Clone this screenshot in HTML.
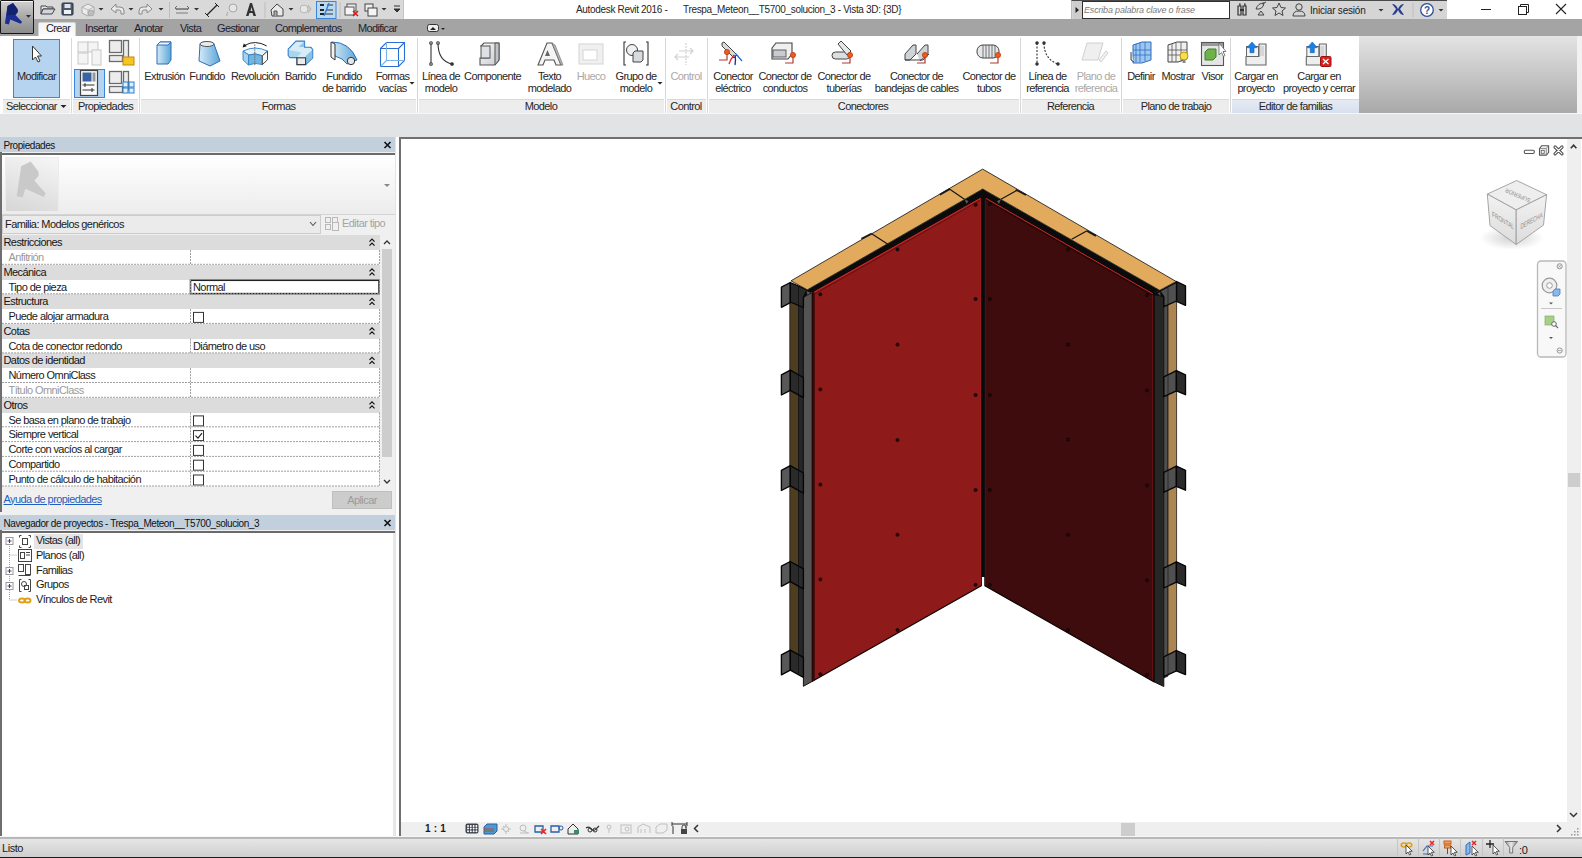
<!DOCTYPE html>
<html><head><meta charset="utf-8">
<style>
*{margin:0;padding:0;box-sizing:border-box}
html,body{width:1582px;height:858px;overflow:hidden;background:#fff;font-family:"Liberation Sans",sans-serif;color:#222}
.a{position:absolute}
.t{position:absolute;font-size:11px;line-height:13px;white-space:nowrap;color:#262626}
svg.a{overflow:visible}
</style></head><body>
<div class="a" style="left:0px;top:0px;width:1582px;height:20px;background:#ffffff;"></div>
<div class="a" style="left:33px;top:0px;width:371px;height:20px;background:#d9d9d9;border-bottom:1px solid #bcbcbc;border-right:1px solid #c4c4c4"></div>
<div class="t" style="left:576px;top:3px;font-size:10px;color:#262626;letter-spacing:-0.33px;">Autodesk Revit 2016 -</div>
<div class="t" style="left:683px;top:3px;font-size:10px;color:#262626;letter-spacing:-0.33px;">Trespa_Meteon__T5700_solucion_3 - Vista 3D: {3D}</div>
<div class="a" style="left:1071px;top:0px;width:376px;height:20px;background:#d5d5d5;border-top:1px solid #4a4a4a;border-left:1px solid #bdbdbd;border-bottom:1px solid #bdbdbd"></div>
<div class="a" style="left:1073px;top:1px;width:9px;height:18px;background:#cdcdcd;"></div>
<svg class="a" style="left:0;top:0" width="1100" height="20"><polygon points="1075.5,7 1079,10 1075.5,13" fill="#222"/></svg><div class="a" style="left:1082px;top:1px;width:148px;height:18px;background:#ffffff;border:1px solid #2e2e2e"></div>
<div class="t" style="left:1084px;top:3.5px;font-size:9px;color:#7a7a7a;letter-spacing:-0.18px;font-style:italic">Escriba palabra clave o frase</div>
<div class="t" style="left:1310px;top:4px;font-size:10px;color:#1a1a2a;letter-spacing:-0.20px;">Iniciar sesión</div>
<div class="a" style="left:0px;top:19px;width:1582px;height:17px;background:#a4a4a4;"></div>
<div class="a" style="left:38px;top:22px;width:38px;height:15px;background:linear-gradient(#f3f3f3,#fdfdfd);border:1px solid #d4d4d4;border-bottom:none;border-radius:2px 2px 0 0"></div>
<div class="t" style="left:46px;top:22px;font-size:11px;color:#202030;letter-spacing:-0.62px;">Crear</div>
<div class="t" style="left:85px;top:22px;font-size:11px;color:#202030;letter-spacing:-0.62px;">Insertar</div>
<div class="t" style="left:134px;top:22px;font-size:11px;color:#202030;letter-spacing:-0.62px;">Anotar</div>
<div class="t" style="left:180px;top:22px;font-size:11px;color:#202030;letter-spacing:-0.62px;">Vista</div>
<div class="t" style="left:217px;top:22px;font-size:11px;color:#202030;letter-spacing:-0.62px;">Gestionar</div>
<div class="t" style="left:275px;top:22px;font-size:11px;color:#202030;letter-spacing:-0.62px;">Complementos</div>
<div class="t" style="left:358px;top:22px;font-size:11px;color:#202030;letter-spacing:-0.62px;">Modificar</div>
<div class="a" style="left:0px;top:0px;width:34px;height:34px;background:linear-gradient(#d0d0d0,#a8a8a8 50%,#8c8c8c);border:1px solid #161616;border-radius:1px;box-shadow:inset 0 1px 0 #f4f4f4"></div>
<svg class="a" style="left:0;top:0" width="1582" height="36" viewBox="0 0 1582 36"><path d="M13,3 L7.5,6 L4.9,23.5 L8.9,24.5 L10.3,19.6 L20.5,23.8 L22.1,21.9 L15.4,14.9 L17.9,11.7 L17.5,9.1 Z" fill="#1b2f93"/><path d="M13,3 L7.5,6 L6.5,15.5 L10.5,15 L15.4,14.9 L17.9,11.7 L17.5,9.1 Z" fill="#0f1f6a" opacity="0.8"/><polygon points="25.9,14.9 31,14.9 28.4,17.7" fill="#2a2f3a"/><path d="M41,6 h5 l1,1 h6 v2 h-10 l-2,5 z" fill="#e6e6e6" stroke="#444" stroke-width="1"/><path d="M43,9 h12 l-3,5 h-11 z" fill="#cfd6df" stroke="#444" stroke-width="1"/><rect x="62" y="3" width="11" height="12" rx="1" fill="#4b5a6e" stroke="#2c3440"/><rect x="64.5" y="4" width="6" height="4" fill="#dfe4ea"/><rect x="64" y="10" width="7" height="4" fill="#f0f0f0"/><path d="M82,7 l6,-3 l6,3 v6 l-6,3 l-6,-3 z" fill="#ececec" stroke="#a8a8a8"/><path d="M82,7 l6,3 l6,-3 M88,10 v6" fill="none" stroke="#b8b8b8"/><circle cx="91" cy="13" r="3" fill="#bdbdbd" stroke="#9a9a9a" stroke-width="0.6"/><polygon points="98.5,8 103.5,8 101,10.5" fill="#333"/><path d="M111,9 l5,-5 v3 h4 q4,0 4,4 v3 h-3 v-2 q0,-2 -2,-2 h-3 v3 z" fill="#eaeaea" stroke="#8a8a8a"/><polygon points="128.5,8 133.5,8 131,10.5" fill="#333"/><path d="M152,9 l-5,-5 v3 h-4 q-4,0 -4,4 v3 h3 v-2 q0,-2 2,-2 h3 v3 z" fill="#eaeaea" stroke="#8a8a8a"/><polygon points="158.5,8 163.5,8 161,10.5" fill="#333"/><line x1="169.5" y1="2" x2="169.5" y2="18" stroke="#bdbdbd"/><rect x="176" y="8" width="12" height="2" fill="#888"/><rect x="176" y="12" width="12" height="2" fill="#aaa"/><path d="M177,6 l-2,2 l2,2 M187,6 l2,2 l-2,2" stroke="#666" fill="none"/><polygon points="194.0,8 199.0,8 196.5,10.5" fill="#333"/><line x1="207" y1="15" x2="217" y2="5" stroke="#222" stroke-width="1.3"/><line x1="205" y1="13" x2="209" y2="17" stroke="#222"/><line x1="215" y1="3" x2="219" y2="7" stroke="#222"/><circle cx="233" cy="8" r="4" fill="#e5e5e5" stroke="#a8a8a8"/><path d="M228,12 q-2,2 -1,4" stroke="#a8a8a8" fill="none"/><path d="M246,16 l4,-13 h2 l4,13 h-2.5 l-1,-3 h-3 l-1,3 z M250.5,11 h2 l-1,-4 z" fill="#333"/><line x1="265" y1="2" x2="265" y2="18" stroke="#bdbdbd"/><path d="M271,10 l6,-6 l6,5 v7 h-11 z" fill="#e9e9e9" stroke="#444"/><path d="M274,16 v-5 h3 v5" fill="#aaa" stroke="#555"/><polygon points="288.5,8 293.5,8 291,10.5" fill="#333"/><circle cx="304" cy="9" r="4" fill="#e6e6e6" stroke="#b5b5b5"/><path d="M308,5 l3,4 l-3,4" fill="#c8c8c8" stroke="#b5b5b5"/><rect x="316.5" y="1.5" width="19.5" height="17" fill="#b9d8f2" stroke="#3a84d5"/><path d="M320,5 h4 M320,10 h4 M320,14 h4" stroke="#222" stroke-width="2"/><path d="M327,5 h6 M326,10 h7 M325,14 h8" stroke="#333"/><line x1="324" y1="16" x2="329" y2="3" stroke="#2f7dd0" stroke-width="1.3"/><line x1="340" y1="2" x2="340" y2="18" stroke="#bdbdbd"/><rect x="347" y="4" width="9" height="7" fill="#eee" stroke="#555"/><rect x="345" y="7" width="9" height="8" fill="#f5f5f5" stroke="#555"/><path d="M353,11 l5,5 M358,11 l-5,5" stroke="#d81c1c" stroke-width="1.6"/><rect x="365" y="4" width="8" height="7" fill="#eee" stroke="#444"/><rect x="368" y="8" width="9" height="8" fill="#f5f5f5" stroke="#444"/><polygon points="381.5,8 386.5,8 384,10.5" fill="#333"/><path d="M394,6 h6 M394,9 l3,3 l3,-3 z" stroke="#333" fill="#333"/><path d="M1238,6 h3 v9 h-3 z M1243,6 h3 v9 h-3 z M1239,4 h1 v2 M1244,4 h1 v2" fill="none" stroke="#333" stroke-width="1.2"/><rect x="1240" y="9" width="4" height="2" fill="#333"/><path d="M1258,15 l3,-4 l3,4 z" fill="none" stroke="#444"/><path d="M1256,9 q2,-6 8,-6 q-1,7 -8,6 z" fill="none" stroke="#444"/><line x1="1262" y1="4" x2="1266" y2="2" stroke="#444"/><path d="M1279,3 l2,4.5 l4.5,0.5 l-3.5,3 l1,4.5 l-4,-2.5 l-4,2.5 l1,-4.5 l-3.5,-3 l4.5,-0.5 z" fill="none" stroke="#444"/><circle cx="1299" cy="7" r="3.2" fill="none" stroke="#444"/><path d="M1293,16 q0,-5 6,-5 q6,0 6,5 z" fill="none" stroke="#444"/><polygon points="1378.5,9 1383.5,9 1381,11.5" fill="#333"/><path d="M1392,4 q4,0 6,5 q2,-5 6,-5 l-4,5 l4,6 q-4,0 -6,-5 q-2,5 -6,5 l4,-6 z" fill="#2a3f8f"/><line x1="1413" y1="3" x2="1413" y2="17" stroke="#bdbdbd"/><circle cx="1427" cy="10" r="6.3" fill="#fff" stroke="#2b4f9a" stroke-width="1.3"/><text x="1427" y="14" font-size="10" font-weight="bold" text-anchor="middle" fill="#2b4f9a" font-family="Liberation Sans">?</text><polygon points="1438.5,9 1443.5,9 1441,11.5" fill="#333"/><line x1="1481" y1="9.5" x2="1491" y2="9.5" stroke="#222"/><rect x="1518.5" y="6.5" width="8" height="8" fill="none" stroke="#222"/><path d="M1520.5,6.5 v-2 h8 v8 h-2" fill="none" stroke="#222"/><path d="M1556,4 l10,10 M1566,4 l-10,10" stroke="#222" stroke-width="1.1"/><rect x="427.5" y="24.5" width="11" height="7" rx="2" fill="#eee" stroke="#333"/><path d="M430,30 l3,-3 l3,3 z" fill="#222"/><polygon points="441,28 445,28 443,30" fill="#222"/></svg>
<div class="a" style="left:0px;top:36px;width:1359px;height:78px;background:#ffffff;"></div>
<div class="a" style="left:1359px;top:36px;width:218px;height:78px;background:linear-gradient(#e4e4e4,#a8a8a8);"></div>
<div class="a" style="left:1577px;top:36px;width:5px;height:78px;background:#f2f2f2;"></div>
<div class="a" style="left:3px;top:99px;width:67px;height:15px;background:#ededed;border-top:1px solid #d9d9d9"></div>
<div class="a" style="left:73px;top:99px;width:65px;height:15px;background:#ededed;border-top:1px solid #d9d9d9"></div>
<div class="a" style="left:141px;top:99px;width:275px;height:15px;background:#ededed;border-top:1px solid #d9d9d9"></div>
<div class="a" style="left:419px;top:99px;width:245px;height:15px;background:#ededed;border-top:1px solid #d9d9d9"></div>
<div class="a" style="left:667px;top:99px;width:39px;height:15px;background:#ededed;border-top:1px solid #d9d9d9"></div>
<div class="a" style="left:709px;top:99px;width:310px;height:15px;background:#ededed;border-top:1px solid #d9d9d9"></div>
<div class="a" style="left:1022px;top:99px;width:98px;height:15px;background:#ededed;border-top:1px solid #d9d9d9"></div>
<div class="a" style="left:1123px;top:99px;width:106px;height:15px;background:#ededed;border-top:1px solid #d9d9d9"></div>
<div class="a" style="left:1232px;top:99px;width:127px;height:15px;background:linear-gradient(#e6ebf3,#d6dfee);border-top:1px solid #cfd8e6"></div>
<div class="a" style="left:71px;top:38px;width:1px;height:76px;background:#d7d7d7;"></div>
<div class="a" style="left:139px;top:38px;width:1px;height:76px;background:#d7d7d7;"></div>
<div class="a" style="left:417px;top:38px;width:1px;height:76px;background:#d7d7d7;"></div>
<div class="a" style="left:665px;top:38px;width:1px;height:76px;background:#d7d7d7;"></div>
<div class="a" style="left:707px;top:38px;width:1px;height:76px;background:#d7d7d7;"></div>
<div class="a" style="left:1020px;top:38px;width:1px;height:76px;background:#d7d7d7;"></div>
<div class="a" style="left:1121px;top:38px;width:1px;height:76px;background:#d7d7d7;"></div>
<div class="a" style="left:1230px;top:38px;width:1px;height:76px;background:#d7d7d7;"></div>
<div class="a" style="left:0px;top:113px;width:1582px;height:1px;background:#f7f7f7;"></div>
<div class="a" style="left:13px;top:39px;width:47px;height:59px;background:#b6d4f0;border:1px solid #3a86d8"></div>
<div class="a" style="left:74px;top:69px;width:31px;height:29px;background:#b6d4f0;border:1px solid #3a86d8"></div>
<div class="t" style="left:-63.5px;width:200px;text-align:center;top:70px;font-size:11px;color:#262626;letter-spacing:-0.60px;">Modificar</div>
<div class="t" style="left:64.5px;width:200px;text-align:center;top:70px;font-size:11px;color:#262626;letter-spacing:-0.62px;">Extrusión</div>
<div class="t" style="left:107.0px;width:200px;text-align:center;top:70px;font-size:11px;color:#262626;letter-spacing:-0.62px;">Fundido</div>
<div class="t" style="left:155.0px;width:200px;text-align:center;top:70px;font-size:11px;color:#262626;letter-spacing:-0.62px;">Revolución</div>
<div class="t" style="left:200.5px;width:200px;text-align:center;top:70px;font-size:11px;color:#262626;letter-spacing:-0.62px;">Barrido</div>
<div class="t" style="left:244.0px;width:200px;text-align:center;top:70px;font-size:11px;color:#262626;letter-spacing:-0.62px;">Fundido</div>
<div class="t" style="left:244.0px;width:200px;text-align:center;top:82px;font-size:11px;color:#262626;letter-spacing:-0.62px;">de barrido</div>
<div class="t" style="left:292.5px;width:200px;text-align:center;top:70px;font-size:11px;color:#262626;letter-spacing:-0.62px;">Formas</div>
<div class="t" style="left:292.5px;width:200px;text-align:center;top:82px;font-size:11px;color:#262626;letter-spacing:-0.62px;">vacías</div>
<div class="t" style="left:341.0px;width:200px;text-align:center;top:70px;font-size:11px;color:#262626;letter-spacing:-0.62px;">Línea de</div>
<div class="t" style="left:341.0px;width:200px;text-align:center;top:82px;font-size:11px;color:#262626;letter-spacing:-0.62px;">modelo</div>
<div class="t" style="left:392.5px;width:200px;text-align:center;top:70px;font-size:11px;color:#262626;letter-spacing:-0.62px;">Componente</div>
<div class="t" style="left:449.5px;width:200px;text-align:center;top:70px;font-size:11px;color:#262626;letter-spacing:-0.62px;">Texto</div>
<div class="t" style="left:449.5px;width:200px;text-align:center;top:82px;font-size:11px;color:#262626;letter-spacing:-0.62px;">modelado</div>
<div class="t" style="left:536.0px;width:200px;text-align:center;top:70px;font-size:11px;color:#262626;letter-spacing:-0.62px;">Grupo de</div>
<div class="t" style="left:536.0px;width:200px;text-align:center;top:82px;font-size:11px;color:#262626;letter-spacing:-0.62px;">modelo</div>
<div class="t" style="left:633.0px;width:200px;text-align:center;top:70px;font-size:11px;color:#262626;letter-spacing:-0.62px;">Conector</div>
<div class="t" style="left:633.0px;width:200px;text-align:center;top:82px;font-size:11px;color:#262626;letter-spacing:-0.62px;">eléctrico</div>
<div class="t" style="left:685.0px;width:200px;text-align:center;top:70px;font-size:11px;color:#262626;letter-spacing:-0.62px;">Conector de</div>
<div class="t" style="left:685.0px;width:200px;text-align:center;top:82px;font-size:11px;color:#262626;letter-spacing:-0.62px;">conductos</div>
<div class="t" style="left:744.0px;width:200px;text-align:center;top:70px;font-size:11px;color:#262626;letter-spacing:-0.62px;">Conector de</div>
<div class="t" style="left:744.0px;width:200px;text-align:center;top:82px;font-size:11px;color:#262626;letter-spacing:-0.62px;">tuberías</div>
<div class="t" style="left:816.5px;width:200px;text-align:center;top:70px;font-size:11px;color:#262626;letter-spacing:-0.62px;">Conector de</div>
<div class="t" style="left:816.5px;width:200px;text-align:center;top:82px;font-size:11px;color:#262626;letter-spacing:-0.62px;">bandejas de cables</div>
<div class="t" style="left:889.0px;width:200px;text-align:center;top:70px;font-size:11px;color:#262626;letter-spacing:-0.62px;">Conector de</div>
<div class="t" style="left:889.0px;width:200px;text-align:center;top:82px;font-size:11px;color:#262626;letter-spacing:-0.62px;">tubos</div>
<div class="t" style="left:947.5px;width:200px;text-align:center;top:70px;font-size:11px;color:#262626;letter-spacing:-0.62px;">Línea de</div>
<div class="t" style="left:947.5px;width:200px;text-align:center;top:82px;font-size:11px;color:#262626;letter-spacing:-0.62px;">referencia</div>
<div class="t" style="left:1041.0px;width:200px;text-align:center;top:70px;font-size:11px;color:#262626;letter-spacing:-0.62px;">Definir</div>
<div class="t" style="left:1078.0px;width:200px;text-align:center;top:70px;font-size:11px;color:#262626;letter-spacing:-0.62px;">Mostrar</div>
<div class="t" style="left:1112.5px;width:200px;text-align:center;top:70px;font-size:11px;color:#262626;letter-spacing:-0.62px;">Visor</div>
<div class="t" style="left:1156.0px;width:200px;text-align:center;top:70px;font-size:11px;color:#262626;letter-spacing:-0.62px;">Cargar en</div>
<div class="t" style="left:1156.0px;width:200px;text-align:center;top:82px;font-size:11px;color:#262626;letter-spacing:-0.62px;">proyecto</div>
<div class="t" style="left:1219.0px;width:200px;text-align:center;top:70px;font-size:11px;color:#262626;letter-spacing:-0.62px;">Cargar en</div>
<div class="t" style="left:1219.0px;width:200px;text-align:center;top:82px;font-size:11px;color:#262626;letter-spacing:-0.62px;">proyecto y cerrar</div>
<div class="t" style="left:491.0px;width:200px;text-align:center;top:70px;font-size:11px;color:#a9a9a9;letter-spacing:-0.62px;">Hueco</div>
<div class="t" style="left:586.0px;width:200px;text-align:center;top:70px;font-size:11px;color:#a9a9a9;letter-spacing:-0.62px;">Control</div>
<div class="t" style="left:996.0px;width:200px;text-align:center;top:70px;font-size:11px;color:#a9a9a9;letter-spacing:-0.62px;">Plano de</div>
<div class="t" style="left:996.0px;width:200px;text-align:center;top:82px;font-size:11px;color:#a9a9a9;letter-spacing:-0.62px;">referencia</div>
<div class="t" style="left:6px;top:100px;font-size:11px;color:#262626;letter-spacing:-0.60px;">Seleccionar</div>
<div class="t" style="left:5.5px;width:200px;text-align:center;top:100px;font-size:11px;color:#262626;letter-spacing:-0.60px;">Propiedades</div>
<div class="t" style="left:178.5px;width:200px;text-align:center;top:100px;font-size:11px;color:#262626;letter-spacing:-0.60px;">Formas</div>
<div class="t" style="left:441.0px;width:200px;text-align:center;top:100px;font-size:11px;color:#262626;letter-spacing:-0.60px;">Modelo</div>
<div class="t" style="left:586.0px;width:200px;text-align:center;top:100px;font-size:11px;color:#262626;letter-spacing:-0.60px;">Control</div>
<div class="t" style="left:763.0px;width:200px;text-align:center;top:100px;font-size:11px;color:#262626;letter-spacing:-0.60px;">Conectores</div>
<div class="t" style="left:970.5px;width:200px;text-align:center;top:100px;font-size:11px;color:#262626;letter-spacing:-0.60px;">Referencia</div>
<div class="t" style="left:1076.0px;width:200px;text-align:center;top:100px;font-size:11px;color:#262626;letter-spacing:-0.60px;">Plano de trabajo</div>
<div class="t" style="left:1195.5px;width:200px;text-align:center;top:100px;font-size:11px;color:#262626;letter-spacing:-0.60px;">Editor de familias</div>
<svg class="a" style="left:0;top:0" width="1582" height="114" viewBox="0 0 1582 114"><defs><linearGradient id="gb" x1="0" y1="0" x2="1" y2="0"><stop offset="0" stop-color="#d6e9f7"/><stop offset="1" stop-color="#5aa6d8"/></linearGradient><linearGradient id="gg" x1="0" y1="0" x2="1" y2="1"><stop offset="0" stop-color="#fafafa"/><stop offset="1" stop-color="#c7cbd0"/></linearGradient></defs><polygon points="60.5,105 66.5,105 63.5,108" fill="#222"/><polygon points="409.5,82 414.5,82 412,84.5" fill="#222"/><polygon points="657.5,82 662.5,82 660,84.5" fill="#222"/><path d="M32.5,46 v14 l3,-3 l2.5,5 l2,-1 l-2.5,-5 h4 z" fill="#fff" stroke="#333" stroke-width="1"/><g stroke="#c8c8c8" fill="#f4f4f4"><rect x="78" y="42" width="10" height="10"/><rect x="88" y="42" width="10" height="10"/><rect x="78" y="53" width="10" height="11"/><rect x="92" y="50" width="9" height="15"/></g><g stroke="#6b6b6b" stroke-width="1.3" fill="#ececec"><rect x="109.5" y="40.5" width="12" height="12"/><rect x="123.5" y="40.5" width="5" height="18"/><rect x="109.5" y="55.5" width="13" height="6"/></g><rect x="123" y="57" width="11" height="8" fill="#f7c325" stroke="#c18a10"/><rect x="80.5" y="70.5" width="17" height="25" fill="#fafafa" stroke="#444" stroke-width="1.2"/><rect x="82.5" y="72.5" width="9" height="9" fill="#3a63a3"/><rect x="92.5" y="72.5" width="3" height="9" fill="#999"/><path d="M82.5,85 h12 M82.5,90 h12 M85,83 v4 M92,88 v4" stroke="#333"/><g stroke="#6b6b6b" stroke-width="1.3" fill="#ececec"><rect x="109.5" y="71.5" width="12" height="12"/><rect x="123.5" y="71.5" width="5" height="18"/><rect x="109.5" y="86.5" width="13" height="6"/></g><g fill="#dff0fb" stroke="#2a7fd0"><rect x="123" y="82" width="5" height="5"/><rect x="129" y="82" width="5" height="5"/><rect x="123" y="88" width="5" height="5"/><rect x="129" y="88" width="5" height="5"/></g><path d="M157,45 l3,-3 h11 v18 l-3,4 h-11 z" fill="url(#gb)" stroke="#2c6fb8" stroke-width="1"/><path d="M157,45 l3,-3 h11 l-3,3 z" fill="#f4f8fb" stroke="#2c6fb8"/><path d="M200,44 q7,-5 14,0 l6,17 l-10,5 l-11,-5 z" fill="url(#gb)" stroke="#2c6fb8"/><ellipse cx="207" cy="44" rx="7" ry="2.5" fill="#e8ecef" stroke="#555"/><path d="M243,51.1 Q255,45 267.5,51.1 L262.3,55.8 Q255,52.5 248.8,55 Z" fill="#e6f3fa" stroke="#2f7fc8" stroke-width="0.9" stroke-linejoin="round"/><path d="M243,51.1 L248.8,55 L248.4,65 L243,59.8 Z" fill="#a6d3ec" stroke="#2f7fc8" stroke-width="0.9" stroke-linejoin="round"/><path d="M248.8,55 Q255,52.5 262.3,55.8 L262.3,64.6 Q255,62 248.4,65 Z" fill="#72b5df" stroke="#2f7fc8" stroke-width="0.9" stroke-linejoin="round"/><path d="M262.3,55.8 L267.5,51.1 L267.5,59.8 L262.3,64.6 Z" fill="#fbfbfb" stroke="#333" stroke-width="0.9" stroke-linejoin="round"/><path d="M266.7,45.9 Q255,39.5 245,45.3" stroke="#222" fill="none" stroke-width="1"/><path d="M242.6,47.6 l1.2,-4 l3,2.6 z" fill="#111"/><line x1="254.8" y1="44.5" x2="254.8" y2="66" stroke="#666" stroke-width="1" stroke-dasharray="1.4,1"/><polygon points="295.9,41.1 304.6,41.1 304.6,47.3 311,47.3 312.7,49.5 312.7,57.9 305.7,64.6 296.9,64.6 296.9,57.6 290,57.6 288.2,55.5 288.2,49.2" fill="#d8ecf7" stroke="#2d7cc8" stroke-width="1.1" stroke-linejoin="round"/><polygon points="305.7,64 312.2,57.9 312.2,50 305.7,56" fill="#86c2e6"/><polygon points="289,50 289,55.3 290.3,57 297,57 301.5,52.5" fill="#a9d6ef"/><polygon points="298.5,47 304.2,47 304.2,41.6" fill="#8ec7e8"/><rect x="297" y="57.8" width="8.6" height="6.8" fill="#ebebee" stroke="#3a3a3a" stroke-width="1.1"/><path d="M332,42 q18,0 25,18 l-10,4 q-4,-6 -12,-8 z" fill="url(#gb)" stroke="#2c6fb8"/><path d="M331,42 l4,2 v16 l-4,-3 z" fill="#f2f2f2" stroke="#333"/><circle cx="351" cy="61" r="3.7" fill="#e3e5e8" stroke="#333"/><g fill="none" stroke="#2a6fd0" stroke-width="1.1"><path d="M380.5,48.5 l6,-6 h18 v18 l-6,6 h-18 z M380.5,48.5 h18 v18 M398.5,48.5 l6,-6"/><path d="M386.5,42.5 v18 h18 M386.5,60.5 l-6,6" stroke="#7ab2ea"/></g><g stroke="#333" stroke-width="1.1" fill="#fff"><line x1="431" y1="43" x2="431" y2="64"/><circle cx="431" cy="43" r="1.3"/><circle cx="431" cy="64" r="1.3"/><path d="M438,43 q0,18 14,21" fill="none"/><circle cx="438" cy="43" r="1.3"/><circle cx="452" cy="64" r="1.3" fill="#333"/></g><path d="M481,46 l3,-3 h15 v17 l-4,5 h-15 v-7 h9 l-1,-10 z" fill="url(#gg)" stroke="#555" stroke-width="1.1"/><path d="M495,43 l4,0 v17 l-4,5 z" fill="#c0c4c8" stroke="#555"/><rect x="481" y="46" width="9" height="12" fill="#dde0e4" stroke="#555"/><path d="M538,65 l9,-22 h5 l9,22 h-5 l-2,-5 h-9 l-2,5 z" fill="#f5f5f5" stroke="#555" stroke-width="1.1"/><path d="M545,56 h5 l-2.5,-6 z" fill="#666"/><path d="M552,43 l3,2 l8,20 h-2 z" fill="#b4b8bd" stroke="#777" stroke-width="0.7"/><rect x="579" y="44" width="24" height="20" fill="#f0f0f0" stroke="#dadada" stroke-width="1.2"/><rect x="583" y="50" width="14" height="10" fill="#fff" stroke="#d5d5d5"/><path d="M626,42 h-2 v23 h2 M646,42 h2 v23 h-2" fill="none" stroke="#333" stroke-width="1.1"/><circle cx="632" cy="50" r="5.5" fill="#f0f0f0" stroke="#444"/><path d="M633,53 l2,-2 h8 v9 l-2,2 h-8 z" fill="#d7dbe0" stroke="#444"/><g stroke="#d2d2d2" stroke-width="1.2" fill="none"><line x1="686" y1="43" x2="686" y2="65" stroke-dasharray="2,1"/><path d="M679,51 h14 M690,48 l3,3 l-3,3 M675,57 h14 M678,54 l-3,3 l3,3"/></g><path d="M722,43 l2,-1 l13,13 l-3,3 l-12,-12 z" fill="#d8dadc" stroke="#444"/><path d="M734,55 q-4,5 -5,9" stroke="#e22" stroke-width="1.3" fill="none"/><path d="M735,55 q1,5 0,10" stroke="#2222aa" stroke-width="1.3" fill="none"/><path d="M736,54 l6,7" stroke="#1b6fd0" stroke-width="1.2"/><path d="M727,52 v8 h-8" stroke="#b03a2e" stroke-width="1.2" fill="none"/><circle cx="727" cy="52" r="2.6" fill="#f05a1a" stroke="#b8400e" stroke-width="0.8"/><path d="M772,48 l4,-5 h16 v11 l-4,5 h-16 z" fill="#f0f0f0" stroke="#444" stroke-width="1.1"/><rect x="773" y="50" width="13" height="7" fill="#c8ccd0" stroke="#444" stroke-width="0.8"/><path d="M793,55 v8 h-8" stroke="#b03a2e" stroke-width="1.2" fill="none"/><circle cx="793" cy="55" r="2.6" fill="#f05a1a" stroke="#b8400e" stroke-width="0.8"/><rect x="832" y="52" width="18" height="7" rx="3.5" fill="#dcdfe2" stroke="#444"/><path d="M838,44 l3,-3 l10,10 l-4,4 z" fill="#e5e7ea" stroke="#444"/><path d="M850,55 v8 h-8" stroke="#b03a2e" stroke-width="1.2" fill="none"/><circle cx="850" cy="55" r="2.6" fill="#f05a1a" stroke="#b8400e" stroke-width="0.8"/><path d="M905,54 l8,-9 l3,0 v9 l-6,6 h-5 z M917,54 l8,-9 h3 v9 l-8,7" fill="#cfd3d8" stroke="#444"/><path d="M905,60 l5,0 l13,0 l6,-6" fill="none" stroke="#444"/><path d="M925,55 v8 h-8" stroke="#b03a2e" stroke-width="1.2" fill="none"/><circle cx="925" cy="55" r="2.6" fill="#f05a1a" stroke="#b8400e" stroke-width="0.8"/><rect x="977" y="45" width="22" height="13" rx="6" fill="#e5e7ea" stroke="#444"/><g stroke="#555" stroke-width="0.8"><line x1="983" y1="45" x2="983" y2="58"/><line x1="986" y1="45" x2="986" y2="58"/><line x1="989" y1="45" x2="989" y2="58"/><line x1="992" y1="45" x2="992" y2="58"/><line x1="995" y1="45" x2="995" y2="58"/></g><path d="M998,55 v8 h-8" stroke="#b03a2e" stroke-width="1.2" fill="none"/><circle cx="998" cy="55" r="2.6" fill="#f05a1a" stroke="#b8400e" stroke-width="0.8"/><g stroke="#333" stroke-width="1.1" fill="#333"><line x1="1037" y1="43" x2="1037" y2="64" stroke-dasharray="2,1.5"/><circle cx="1037" cy="43" r="1.2"/><circle cx="1037" cy="64" r="1.2"/><path d="M1044,43 q0,16 14,21" fill="none" stroke-dasharray="2,1.5"/><circle cx="1044" cy="43" r="1.2"/><circle cx="1058" cy="64" r="1.2"/></g><path d="M1087,43 h16 l-5,17 h-16 z" fill="#efefef" stroke="#d0d0d0"/><path d="M1099,60 l7,-9 l2,2 l-7,9 z" fill="#f2f2f2" stroke="#cfcfcf"/><path d="M1133,45 l9,-3 h9 v18 l-9,3 h-9 z" fill="#9ec6ee" stroke="#2f6fc0"/><g stroke="#2f6fc0" stroke-width="0.8"><path d="M1136,44 v18 M1140,43 v19 M1145,42 v19 M1133,50 h18 M1133,55 h18"/></g><path d="M1131,52 v8 l3,2" stroke="#444" fill="#e0e0e0"/><path d="M1168,45 l9,-3 h10 v17 l-9,3 h-10 z" fill="#f0f0f0" stroke="#444"/><g stroke="#555" stroke-width="0.8"><path d="M1172,44 v18 M1176,43 v19 M1181,42 v19 M1168,50 h19 M1168,55 h19"/></g><circle cx="1184" cy="56" r="4" fill="#f6e04a" stroke="#b99a10"/><rect x="1182.5" y="60" width="3" height="3" fill="#888"/><rect x="1201.5" y="42.5" width="22" height="23" fill="#e5e5e5" stroke="#555" stroke-width="1.1"/><rect x="1202" y="43" width="21" height="3" fill="#999"/><path d="M1205,52 l3,-3 h8 v8 l-3,3 h-8 z" fill="#6fb24a" stroke="#3f7f2a"/><path d="M1219,43 v12 l2.5,-2.5 l2,4 l1.5,-1 l-2,-4 h3 z" fill="#fff" stroke="#555" stroke-width="0.7"/><path d="M1246,56.5 h13 v-12.5 h7 v21 h-20 z" fill="#eeeeee" stroke="#666" stroke-width="1.1" stroke-linejoin="round"/><rect x="1260" y="46" width="4" height="10" fill="#d4d6da"/><rect x="1246.5" y="46.5" width="12" height="10" fill="#f4f4f4" stroke="#666" stroke-width="1"/><path d="M1250,52.7 v-5 h-3 l5,-5.7 l5,5.7 h-3 v5 z" fill="#1b7fe3" stroke="#0b5cb8" stroke-width="0.6"/><path d="M1306.3,56.5 h13 v-12.5 h7 v21 h-20 z" fill="#eeeeee" stroke="#666" stroke-width="1.1" stroke-linejoin="round"/><rect x="1320.3" y="46" width="4" height="10" fill="#d4d6da"/><rect x="1306.8" y="46.5" width="12" height="10" fill="#f4f4f4" stroke="#666" stroke-width="1"/><path d="M1310.3,52.7 v-5 h-3 l5,-5.7 l5,5.7 h-3 v5 z" fill="#1b7fe3" stroke="#0b5cb8" stroke-width="0.6"/><rect x="1320.5" y="56.5" width="10.5" height="10" rx="1.2" fill="#d6231f" stroke="#9a1010"/><path d="M1323,59 l5.5,5 M1328.5,59 l-5.5,5" stroke="#fff" stroke-width="1.2"/></svg>
<div class="a" style="left:0px;top:114px;width:1582px;height:23px;background:#e2e3e5;"></div>
<div class="a" style="left:0px;top:137px;width:395px;height:375px;background:#f0f0f0;"></div>
<div class="a" style="left:0px;top:137px;width:395px;height:15px;background:#c2d0de;"></div>
<div class="t" style="left:3.5px;top:138.5px;font-size:10px;color:#111;letter-spacing:-0.44px;">Propiedades</div>
<div class="a" style="left:0px;top:152px;width:2px;height:360px;background:#6e6e6e;"></div>
<div class="a" style="left:2px;top:153px;width:393px;height:2px;background:#6a6a6a;"></div>
<div class="a" style="left:2px;top:155px;width:393px;height:60px;background:linear-gradient(#ffffff,#ececec);"></div>
<div class="a" style="left:5px;top:157px;width:54px;height:55px;background:linear-gradient(200deg,#f6f6f6,#d6d6d6);border:1px solid #ececec"></div>
<div class="a" style="left:2px;top:214px;width:393px;height:1px;background:#d4d4d4;"></div>
<div class="a" style="left:2px;top:215px;width:319px;height:19px;background:#ebebeb;border:1px solid #cccccc"></div>
<div class="t" style="left:5px;top:218px;font-size:11px;color:#1a1a1a;letter-spacing:-0.58px;">Familia: Modelos genéricos</div>
<div class="t" style="left:342px;top:217px;font-size:11px;color:#a4a4a4;letter-spacing:-0.58px;">Editar tipo</div>
<div class="a" style="left:2px;top:235.2px;width:378px;height:14.78px;background:#dcdcdc;"></div>
<div class="t" style="left:3.5px;top:236.2px;font-size:11px;color:#141414;letter-spacing:-0.58px;">Restricciones</div>
<div class="a" style="left:2px;top:250.0px;width:378px;height:14.78px;background:#ffffff;"></div>
<div class="t" style="left:8.5px;top:251.0px;font-size:11px;color:#9a9a9a;letter-spacing:-0.58px;">Anfitrión</div>
<div class="a" style="left:2px;top:264.8px;width:378px;height:14.78px;background:#dcdcdc;"></div>
<div class="t" style="left:3.5px;top:265.8px;font-size:11px;color:#141414;letter-spacing:-0.58px;">Mecánica</div>
<div class="a" style="left:2px;top:279.5px;width:378px;height:14.78px;background:#ffffff;"></div>
<div class="t" style="left:8.5px;top:280.5px;font-size:11px;color:#1a1a1a;letter-spacing:-0.58px;">Tipo de pieza</div>
<div class="t" style="left:193px;top:280.5px;font-size:11px;color:#1a1a1a;letter-spacing:-0.58px;">Normal</div>
<div class="a" style="left:2px;top:294.3px;width:378px;height:14.78px;background:#dcdcdc;"></div>
<div class="t" style="left:3.5px;top:295.3px;font-size:11px;color:#141414;letter-spacing:-0.58px;">Estructura</div>
<div class="a" style="left:2px;top:309.1px;width:378px;height:14.78px;background:#ffffff;"></div>
<div class="t" style="left:8.5px;top:310.1px;font-size:11px;color:#1a1a1a;letter-spacing:-0.58px;">Puede alojar armadura</div>
<div class="a" style="left:2px;top:323.9px;width:378px;height:14.78px;background:#dcdcdc;"></div>
<div class="t" style="left:3.5px;top:324.9px;font-size:11px;color:#141414;letter-spacing:-0.58px;">Cotas</div>
<div class="a" style="left:2px;top:338.7px;width:378px;height:14.78px;background:#ffffff;"></div>
<div class="t" style="left:8.5px;top:339.7px;font-size:11px;color:#1a1a1a;letter-spacing:-0.58px;">Cota de conector redondo</div>
<div class="t" style="left:193px;top:339.7px;font-size:11px;color:#1a1a1a;letter-spacing:-0.58px;">Diámetro de uso</div>
<div class="a" style="left:2px;top:353.4px;width:378px;height:14.78px;background:#dcdcdc;"></div>
<div class="t" style="left:3.5px;top:354.4px;font-size:11px;color:#141414;letter-spacing:-0.58px;">Datos de identidad</div>
<div class="a" style="left:2px;top:368.2px;width:378px;height:14.78px;background:#ffffff;"></div>
<div class="t" style="left:8.5px;top:369.2px;font-size:11px;color:#1a1a1a;letter-spacing:-0.58px;">Número OmniClass</div>
<div class="a" style="left:2px;top:383.0px;width:378px;height:14.78px;background:#ffffff;"></div>
<div class="t" style="left:8.5px;top:384.0px;font-size:11px;color:#9a9a9a;letter-spacing:-0.58px;">Título OmniClass</div>
<div class="a" style="left:2px;top:397.8px;width:378px;height:14.78px;background:#dcdcdc;"></div>
<div class="t" style="left:3.5px;top:398.8px;font-size:11px;color:#141414;letter-spacing:-0.58px;">Otros</div>
<div class="a" style="left:2px;top:412.6px;width:378px;height:14.78px;background:#ffffff;"></div>
<div class="t" style="left:8.5px;top:413.6px;font-size:11px;color:#1a1a1a;letter-spacing:-0.58px;">Se basa en plano de trabajo</div>
<div class="a" style="left:2px;top:427.3px;width:378px;height:14.78px;background:#ffffff;"></div>
<div class="t" style="left:8.5px;top:428.3px;font-size:11px;color:#1a1a1a;letter-spacing:-0.58px;">Siempre vertical</div>
<div class="a" style="left:2px;top:442.1px;width:378px;height:14.78px;background:#ffffff;"></div>
<div class="t" style="left:8.5px;top:443.1px;font-size:11px;color:#1a1a1a;letter-spacing:-0.58px;">Corte con vacíos al cargar</div>
<div class="a" style="left:2px;top:456.9px;width:378px;height:14.78px;background:#ffffff;"></div>
<div class="t" style="left:8.5px;top:457.9px;font-size:11px;color:#1a1a1a;letter-spacing:-0.58px;">Compartido</div>
<div class="a" style="left:2px;top:471.7px;width:378px;height:14.78px;background:#ffffff;"></div>
<div class="t" style="left:8.5px;top:472.7px;font-size:11px;color:#1a1a1a;letter-spacing:-0.58px;">Punto de cálculo de habitación</div>
<div class="a" style="left:381px;top:235px;width:13px;height:252px;background:#f0f0f0;"></div>
<div class="a" style="left:382px;top:249px;width:10px;height:208px;background:#cdcdcd;"></div>
<svg class="a" style="left:0;top:0" width="400" height="520" viewBox="0 0 400 520"><path d="M30.6,161.4 L21.2,166.3 L16.7,196.5 L22.8,197.3 L25.3,188.7 L43.6,196.9 L45.7,193.6 L34.3,180.6 L38.7,175.7 L38.3,171.6 Z" fill="#c9c9c9"/><path d="M384.5,142 l6,6 M390.5,142 l-6,6" stroke="#111" stroke-width="1.6"/><path d="M384,184 l3,3 l3,-3 z" fill="#888"/><path d="M310,222 l3,3.5 l3,-3.5" fill="none" stroke="#555" stroke-width="1.1"/><g fill="none" stroke="#b8b8b8"><rect x="325.5" y="217.5" width="5" height="5"/><rect x="332.5" y="217.5" width="5" height="5"/><rect x="325.5" y="224.5" width="5" height="5"/><rect x="332.5" y="222.5" width="6" height="8"/></g><path d="M369.5,241.7 l2.5,-2.5 l2.5,2.5 M369.5,245.7 l2.5,-2.5 l2.5,2.5" fill="none" stroke="#111" stroke-width="1.2"/><line x1="2" y1="264.3" x2="380" y2="264.3" stroke="#a0a0a0" stroke-dasharray="2,1"/><line x1="190.5" y1="250.0" x2="190.5" y2="264.3" stroke="#a0a0a0" stroke-dasharray="2,1"/><line x1="379.5" y1="250.0" x2="379.5" y2="264.3" stroke="#a0a0a0" stroke-dasharray="2,1"/><path d="M369.5,271.3 l2.5,-2.5 l2.5,2.5 M369.5,275.3 l2.5,-2.5 l2.5,2.5" fill="none" stroke="#111" stroke-width="1.2"/><rect x="190.5" y="280.3" width="188.5" height="13.3" fill="none" stroke="#222" stroke-width="1.5"/><line x1="2" y1="293.8" x2="380" y2="293.8" stroke="#a0a0a0" stroke-dasharray="2,1"/><line x1="190.5" y1="279.5" x2="190.5" y2="293.8" stroke="#a0a0a0" stroke-dasharray="2,1"/><line x1="379.5" y1="279.5" x2="379.5" y2="293.8" stroke="#a0a0a0" stroke-dasharray="2,1"/><path d="M369.5,300.8 l2.5,-2.5 l2.5,2.5 M369.5,304.8 l2.5,-2.5 l2.5,2.5" fill="none" stroke="#111" stroke-width="1.2"/><rect x="193.5" y="312.4" width="10" height="10" fill="#fff" stroke="#333"/><line x1="2" y1="323.4" x2="380" y2="323.4" stroke="#a0a0a0" stroke-dasharray="2,1"/><line x1="190.5" y1="309.1" x2="190.5" y2="323.4" stroke="#a0a0a0" stroke-dasharray="2,1"/><line x1="379.5" y1="309.1" x2="379.5" y2="323.4" stroke="#a0a0a0" stroke-dasharray="2,1"/><path d="M369.5,330.4 l2.5,-2.5 l2.5,2.5 M369.5,334.4 l2.5,-2.5 l2.5,2.5" fill="none" stroke="#111" stroke-width="1.2"/><line x1="2" y1="352.9" x2="380" y2="352.9" stroke="#a0a0a0" stroke-dasharray="2,1"/><line x1="190.5" y1="338.7" x2="190.5" y2="352.9" stroke="#a0a0a0" stroke-dasharray="2,1"/><line x1="379.5" y1="338.7" x2="379.5" y2="352.9" stroke="#a0a0a0" stroke-dasharray="2,1"/><path d="M369.5,359.9 l2.5,-2.5 l2.5,2.5 M369.5,363.9 l2.5,-2.5 l2.5,2.5" fill="none" stroke="#111" stroke-width="1.2"/><line x1="2" y1="382.5" x2="380" y2="382.5" stroke="#a0a0a0" stroke-dasharray="2,1"/><line x1="190.5" y1="368.2" x2="190.5" y2="382.5" stroke="#a0a0a0" stroke-dasharray="2,1"/><line x1="379.5" y1="368.2" x2="379.5" y2="382.5" stroke="#a0a0a0" stroke-dasharray="2,1"/><line x1="2" y1="397.3" x2="380" y2="397.3" stroke="#a0a0a0" stroke-dasharray="2,1"/><line x1="190.5" y1="383.0" x2="190.5" y2="397.3" stroke="#a0a0a0" stroke-dasharray="2,1"/><line x1="379.5" y1="383.0" x2="379.5" y2="397.3" stroke="#a0a0a0" stroke-dasharray="2,1"/><path d="M369.5,404.3 l2.5,-2.5 l2.5,2.5 M369.5,408.3 l2.5,-2.5 l2.5,2.5" fill="none" stroke="#111" stroke-width="1.2"/><rect x="193.5" y="415.9" width="10" height="10" fill="#fff" stroke="#333"/><line x1="2" y1="426.8" x2="380" y2="426.8" stroke="#a0a0a0" stroke-dasharray="2,1"/><line x1="190.5" y1="412.6" x2="190.5" y2="426.8" stroke="#a0a0a0" stroke-dasharray="2,1"/><line x1="379.5" y1="412.6" x2="379.5" y2="426.8" stroke="#a0a0a0" stroke-dasharray="2,1"/><rect x="193.5" y="430.6" width="10" height="10" fill="#fff" stroke="#333"/><path d="M195.5,435.6 l2.5,2.5 l4,-5" fill="none" stroke="#222" stroke-width="1.2"/><line x1="2" y1="441.6" x2="380" y2="441.6" stroke="#a0a0a0" stroke-dasharray="2,1"/><line x1="190.5" y1="427.3" x2="190.5" y2="441.6" stroke="#a0a0a0" stroke-dasharray="2,1"/><line x1="379.5" y1="427.3" x2="379.5" y2="441.6" stroke="#a0a0a0" stroke-dasharray="2,1"/><rect x="193.5" y="445.4" width="10" height="10" fill="#fff" stroke="#333"/><line x1="2" y1="456.4" x2="380" y2="456.4" stroke="#a0a0a0" stroke-dasharray="2,1"/><line x1="190.5" y1="442.1" x2="190.5" y2="456.4" stroke="#a0a0a0" stroke-dasharray="2,1"/><line x1="379.5" y1="442.1" x2="379.5" y2="456.4" stroke="#a0a0a0" stroke-dasharray="2,1"/><rect x="193.5" y="460.2" width="10" height="10" fill="#fff" stroke="#333"/><line x1="2" y1="471.2" x2="380" y2="471.2" stroke="#a0a0a0" stroke-dasharray="2,1"/><line x1="190.5" y1="456.9" x2="190.5" y2="471.2" stroke="#a0a0a0" stroke-dasharray="2,1"/><line x1="379.5" y1="456.9" x2="379.5" y2="471.2" stroke="#a0a0a0" stroke-dasharray="2,1"/><rect x="193.5" y="475.0" width="10" height="10" fill="#fff" stroke="#333"/><line x1="2" y1="486.0" x2="380" y2="486.0" stroke="#a0a0a0" stroke-dasharray="2,1"/><line x1="190.5" y1="471.7" x2="190.5" y2="486.0" stroke="#a0a0a0" stroke-dasharray="2,1"/><line x1="379.5" y1="471.7" x2="379.5" y2="486.0" stroke="#a0a0a0" stroke-dasharray="2,1"/><path d="M384,244 l3,-3 l3,3" fill="none" stroke="#333" stroke-width="1.3"/><path d="M384,480 l3,3 l3,-3" fill="none" stroke="#333" stroke-width="1.3"/></svg>
<div class="t" style="left:3.5px;top:492.5px;font-size:11px;color:#1f5fbf;letter-spacing:-0.58px;text-decoration:underline">Ayuda de propiedades</div>
<div class="a" style="left:332px;top:491px;width:60px;height:18px;background:#cccccc;border:1px solid #bebebe"></div>
<div class="t" style="left:332.0px;width:60px;text-align:center;top:493.5px;font-size:11px;color:#9b9b9b;letter-spacing:-0.58px;">Aplicar</div>
<div class="a" style="left:395px;top:137px;width:1px;height:699px;background:#e4e4e4;"></div>
<div class="a" style="left:0px;top:512px;width:395px;height:324px;background:#f0f0f0;"></div>
<div class="a" style="left:0px;top:515px;width:395px;height:15px;background:#c2d0de;"></div>
<div class="t" style="left:3.5px;top:516.5px;font-size:10px;color:#111;letter-spacing:-0.44px;">Navegador de proyectos - Trespa_Meteon__T5700_solucion_3</div>
<div class="a" style="left:2px;top:531px;width:393px;height:2px;background:#6a6a6a;"></div>
<div class="a" style="left:0px;top:530px;width:2px;height:306px;background:#6e6e6e;"></div>
<div class="a" style="left:2px;top:533px;width:391px;height:303px;background:#ffffff;"></div>
<div class="a" style="left:393px;top:533px;width:2px;height:303px;background:#e8e8e8;"></div>
<div class="a" style="left:34px;top:534px;width:49px;height:15px;background:#e5e5e5;"></div>
<div class="t" style="left:36px;top:533.8px;font-size:11px;color:#1a1a1a;letter-spacing:-0.58px;">Vistas (all)</div>
<div class="t" style="left:36px;top:548.6px;font-size:11px;color:#1a1a1a;letter-spacing:-0.58px;">Planos (all)</div>
<div class="t" style="left:36px;top:563.5px;font-size:11px;color:#1a1a1a;letter-spacing:-0.58px;">Familias</div>
<div class="t" style="left:36px;top:578.3px;font-size:11px;color:#1a1a1a;letter-spacing:-0.58px;">Grupos</div>
<div class="t" style="left:36px;top:593px;font-size:11px;color:#1a1a1a;letter-spacing:-0.58px;">Vínculos de Revit</div>
<svg class="a" style="left:0;top:0" width="400" height="620" viewBox="0 0 400 620"><path d="M9.5,544 v56 M9.5,555 h8 M9.5,600 h8" stroke="#a0a0a0" stroke-dasharray="1,1" fill="none"/><rect x="6.0" y="537.5" width="7" height="7" fill="#fff" stroke="#9a9a9a"/><path d="M7.5,541 h4 M9.5,539 v4" stroke="#3a3a8a"/><rect x="6.0" y="582.5" width="7" height="7" fill="#fff" stroke="#9a9a9a"/><path d="M7.5,586 h4 M9.5,584 v4" stroke="#3a3a8a"/><rect x="6.0" y="567.5" width="7" height="7" fill="#fff" stroke="#9a9a9a"/><path d="M7.5,571 h4 M9.5,569 v4" stroke="#3a3a8a"/><g fill="none" stroke="#444" stroke-width="1"><path d="M19.5,537.5 v-2 h2 M28.5,535.5 h2 v2 M30.5,545.5 v2 h-2 M21.5,547.5 h-2 v-2"/><rect x="22.5" y="538.5" width="5" height="6"/></g><g fill="none" stroke="#444"><rect x="18.5" y="549.5" width="13" height="12"/><rect x="20.5" y="552.5" width="4" height="6"/><path d="M26,552.5 h4 M26,555 h4"/></g><g fill="none" stroke="#444"><rect x="18.5" y="564.5" width="5" height="7"/><rect x="25.5" y="564.5" width="5" height="10"/><path d="M18.5,575.5 h12"/></g><g fill="none" stroke="#444"><path d="M19.5,579.5 h2 M19.5,579.5 v12 h2 M30.5,579.5 h-2 M30.5,579.5 v12 h-2"/><circle cx="24" cy="584" r="2.5"/><rect x="24.5" y="585.5" width="4" height="4"/></g><g fill="none" stroke="#e0a010" stroke-width="2"><ellipse cx="22" cy="600.5" rx="3" ry="2"/><ellipse cx="27.5" cy="600.5" rx="3" ry="2"/></g><path d="M384.5,520 l6,6 M390.5,520 l-6,6" stroke="#111" stroke-width="1.6"/></svg>
<div class="a" style="left:399px;top:137px;width:1183px;height:699px;background:#ffffff;"></div>
<div class="a" style="left:399px;top:137px;width:1183px;height:2px;background:#707070;"></div>
<div class="a" style="left:399px;top:137px;width:2px;height:699px;background:#707070;"></div>
<div class="a" style="left:1567px;top:139px;width:14px;height:684px;background:#efefef;"></div>
<div class="a" style="left:1568px;top:473px;width:12px;height:14px;background:#cdcdcd;"></div>
<div class="a" style="left:401px;top:822px;width:1166px;height:14px;background:#efefef;"></div>
<div class="a" style="left:1567px;top:823px;width:14px;height:13px;background:#efefef;"></div>
<div class="a" style="left:1121px;top:823px;width:14px;height:13px;background:#cdcdcd;"></div>
<div class="t" style="left:425px;top:822px;font-size:11px;color:#1a1a1a;letter-spacing:0.20px;font-weight:bold;font-size:10px">1 : 1</div>
<svg class="a" style="left:0;top:0" width="1582" height="858" viewBox="0 0 1582 858"><defs><radialGradient id="shd" cx="0.5" cy="0.5" r="0.5"><stop offset="0" stop-color="#000" stop-opacity="0.18"/><stop offset="1" stop-color="#000" stop-opacity="0"/></radialGradient><linearGradient id="cubeL" x1="0" y1="0" x2="0" y2="1"><stop offset="0" stop-color="#f2f2f2"/><stop offset="1" stop-color="#dcdcdc"/></linearGradient></defs><polygon points="789.8,284 798.5,288 798.5,660 789.8,656" fill="#4e3d20" stroke="#1a1a1a" stroke-width="0.8" stroke-linejoin="round" /><polygon points="798.5,288 803.4,291 803.4,677 798.5,674" fill="#262626" stroke="#111" stroke-width="0.8" stroke-linejoin="round" /><polygon points="803.4,297.4 812.4,292.5 812.4,681.3 803.4,686.3" fill="#545454" stroke="#111" stroke-width="1" stroke-linejoin="round" /><polygon points="812.4,292.5 814.8,291.3 814.8,680 812.4,681.3" fill="#3a0909" stroke="none" stroke-width="1" stroke-linejoin="round" /><polygon points="1154,293.4 1163.8,297 1163.8,686.5 1154,681.8" fill="#262626" stroke="#111" stroke-width="1" stroke-linejoin="round" /><polygon points="1163.8,296 1168,294 1168,676 1163.8,678" fill="#4f4f4f" stroke="#111" stroke-width="0.8" stroke-linejoin="round" /><polygon points="1168,294 1176.6,290 1176.6,660 1168,664" fill="#ad8550" stroke="#1a1a1a" stroke-width="0.8" stroke-linejoin="round" /><polygon points="781.4,287.2 790.3,282.5 790.3,302.6 781.4,307.3" fill="#585858" stroke="#050505" stroke-width="1.35" stroke-linejoin="round" /><polygon points="790.3,282.5 807.3,289.8 803.4,297.4 803.4,307.5 790.3,302.0" fill="#2a2a2a" stroke="#050505" stroke-width="1.35" stroke-linejoin="round" /><line x1="798.5" y1="286.7" x2="798.5" y2="305.0" stroke="#111" stroke-width="0.8"/><polygon points="1159.7,291.2 1176.6,282.2 1176.6,301 1163.8,306.6 1163.8,297" fill="#505050" stroke="#050505" stroke-width="1.35" stroke-linejoin="round" /><line x1="1168" y1="288" x2="1168" y2="305" stroke="#222" stroke-width="0.8"/><polygon points="1176.6,281.5 1185.5,285.9 1185.5,305.4 1176.6,301.5" fill="#2a2a2a" stroke="#050505" stroke-width="1.35" stroke-linejoin="round" /><polygon points="781.4,374.9 790.3,370.2 790.3,390.3 781.4,395.0" fill="#585858" stroke="#050505" stroke-width="1.35" stroke-linejoin="round" /><polygon points="790.3,370.2 803.4,377.5 803.4,397.59999999999997 790.3,390.3" fill="#2a2a2a" stroke="#050505" stroke-width="1.35" stroke-linejoin="round" /><line x1="798.5" y1="374.8" x2="798.5" y2="394.9" stroke="#111" stroke-width="0.8"/><polygon points="1163.8,376.9 1176.4,370.59999999999997 1176.4,390.9 1163.8,396.7" fill="#505050" stroke="#050505" stroke-width="1.35" stroke-linejoin="round" /><line x1="1168" y1="374.9" x2="1168" y2="394.79999999999995" stroke="#222" stroke-width="0.8"/><polygon points="1176.4,370.59999999999997 1185.5,374.79999999999995 1185.5,394.7 1176.4,390.9" fill="#2a2a2a" stroke="#050505" stroke-width="1.35" stroke-linejoin="round" /><polygon points="781.4,470.4 790.3,465.7 790.3,485.8 781.4,490.5" fill="#585858" stroke="#050505" stroke-width="1.35" stroke-linejoin="round" /><polygon points="790.3,465.7 803.4,473.0 803.4,493.09999999999997 790.3,485.8" fill="#2a2a2a" stroke="#050505" stroke-width="1.35" stroke-linejoin="round" /><line x1="798.5" y1="470.3" x2="798.5" y2="490.4" stroke="#111" stroke-width="0.8"/><polygon points="1163.8,472.4 1176.4,466.09999999999997 1176.4,486.4 1163.8,492.2" fill="#505050" stroke="#050505" stroke-width="1.35" stroke-linejoin="round" /><line x1="1168" y1="470.4" x2="1168" y2="490.29999999999995" stroke="#222" stroke-width="0.8"/><polygon points="1176.4,466.09999999999997 1185.5,470.29999999999995 1185.5,490.2 1176.4,486.4" fill="#2a2a2a" stroke="#050505" stroke-width="1.35" stroke-linejoin="round" /><polygon points="781.4,566.2 790.3,561.5 790.3,581.6 781.4,586.3" fill="#585858" stroke="#050505" stroke-width="1.35" stroke-linejoin="round" /><polygon points="790.3,561.5 803.4,568.8 803.4,588.9 790.3,581.6" fill="#2a2a2a" stroke="#050505" stroke-width="1.35" stroke-linejoin="round" /><line x1="798.5" y1="566.1" x2="798.5" y2="586.2" stroke="#111" stroke-width="0.8"/><polygon points="1163.8,568.1999999999999 1176.4,561.9 1176.4,582.1999999999999 1163.8,588.0" fill="#505050" stroke="#050505" stroke-width="1.35" stroke-linejoin="round" /><line x1="1168" y1="566.1999999999999" x2="1168" y2="586.1" stroke="#222" stroke-width="0.8"/><polygon points="1176.4,561.9 1185.5,566.1 1185.5,586.0 1176.4,582.1999999999999" fill="#2a2a2a" stroke="#050505" stroke-width="1.35" stroke-linejoin="round" /><polygon points="781.4,654.8000000000001 790.3,650.1 790.3,670.2 781.4,674.9" fill="#585858" stroke="#050505" stroke-width="1.35" stroke-linejoin="round" /><polygon points="790.3,650.1 803.4,657.4 803.4,677.5 790.3,670.2" fill="#2a2a2a" stroke="#050505" stroke-width="1.35" stroke-linejoin="round" /><line x1="798.5" y1="654.7" x2="798.5" y2="674.8000000000001" stroke="#111" stroke-width="0.8"/><polygon points="1163.8,656.8 1176.4,650.5 1176.4,670.8 1163.8,676.6" fill="#505050" stroke="#050505" stroke-width="1.35" stroke-linejoin="round" /><line x1="1168" y1="654.8" x2="1168" y2="674.7" stroke="#222" stroke-width="0.8"/><polygon points="1176.4,650.5 1185.5,654.7 1185.5,674.6 1176.4,670.8" fill="#2a2a2a" stroke="#050505" stroke-width="1.35" stroke-linejoin="round" /><polygon points="812.4,291.8 981.3,196.8 981.3,585.7 812.4,681.3" fill="#8f1a1a" stroke="#100303" stroke-width="1.25" stroke-linejoin="round" /><polygon points="984.9,196.8 1153.8,293.4 1153.8,681.8 984.9,585.7" fill="#3e0c0c" stroke="#0a0202" stroke-width="1.25" stroke-linejoin="round" /><polygon points="812.4,292.3 814.8,291 814.8,680 812.4,681.3" fill="#3a0909" stroke="none" stroke-width="1" stroke-linejoin="round" /><polyline points="814,292.3 980.5,198.3" fill="none" stroke="#cf2a2a" stroke-width="1"/><polyline points="814,294.2 980.5,200.2" fill="none" stroke="#5a0c0c" stroke-width="0.8"/><polyline points="986,198.3 1152.8,293.7" fill="none" stroke="#cf2a2a" stroke-width="1"/><polyline points="986,200.2 1152.8,295.6" fill="none" stroke="#1a0404" stroke-width="0.8"/><line x1="1152.7" y1="295" x2="1152.7" y2="680" stroke="#6a1010" stroke-width="1"/><line x1="980.7" y1="199" x2="980.7" y2="585" stroke="#b82222" stroke-width="0.8"/><line x1="985.5" y1="199" x2="985.5" y2="585" stroke="#5c1010" stroke-width="0.8"/><polygon points="981.3,189 984.9,189 984.9,577 981.3,577" fill="#0a0a0a" stroke="none" stroke-width="1" stroke-linejoin="round" /><polygon points="807.3,289.8 982.7,189 1159.7,290.3 1153.8,293.4 984.9,196.8 981.3,196.8 812.4,291.8 803.4,297.4" fill="#0b0b0b" stroke="none" stroke-width="1" stroke-linejoin="round" /><polygon points="791,280.8 982.7,169.1 1176.2,281.5 1159.7,290.3 982.7,189 807.3,289.8" fill="#e2aa5c" stroke="#262626" stroke-width="0.9" stroke-linejoin="round" /><line x1="949.4" y1="189" x2="964.5" y2="199.2" stroke="#141414" stroke-width="1.1"/><line x1="1016.6" y1="190.6" x2="1001" y2="199.2" stroke="#141414" stroke-width="1.1"/><line x1="871.7" y1="233.8" x2="887.5" y2="244" stroke="#141414" stroke-width="1.1"/><line x1="1086.6" y1="230.9" x2="1071.7" y2="239.3" stroke="#141414" stroke-width="1.1"/><line x1="939.8" y1="194.8" x2="950" y2="188.9" stroke="#1a1a1a" stroke-width="1.8"/><line x1="861.4" y1="238.7" x2="871.7" y2="233.6" stroke="#1a1a1a" stroke-width="1.8"/><line x1="1015.7" y1="189.7" x2="1026" y2="195" stroke="#1a1a1a" stroke-width="1.8"/><line x1="1086.6" y1="230.7" x2="1096" y2="235.9" stroke="#1a1a1a" stroke-width="1.8"/><polygon points="964.8,199.6 968.5,201 966.5,204" fill="#5a5a5a" stroke="none" stroke-width="1" stroke-linejoin="round" /><polygon points="1000.8,199.6 997,201 999,204" fill="#5a5a5a" stroke="none" stroke-width="1" stroke-linejoin="round" /><polygon points="806.5,291 810,292.5 807.5,295" fill="#5a5a5a" stroke="none" stroke-width="1" stroke-linejoin="round" /><polygon points="1153.3,293.2 1160,290 1164.2,297.2 1154,295" fill="#0b0b0b" stroke="none" stroke-width="1" stroke-linejoin="round" /><polygon points="1160.3,292 1157.5,293.5 1160.5,296" fill="#505050" stroke="none" stroke-width="1" stroke-linejoin="round" /><circle cx="820.3" cy="294.3" r="1.5" fill="#2a0a0a" stroke="#0d0505" stroke-width="0.9"/><circle cx="820.3" cy="389.4" r="1.5" fill="#2a0a0a" stroke="#0d0505" stroke-width="0.9"/><circle cx="820.3" cy="484.5" r="1.5" fill="#2a0a0a" stroke="#0d0505" stroke-width="0.9"/><circle cx="820.3" cy="579.4" r="1.5" fill="#2a0a0a" stroke="#0d0505" stroke-width="0.9"/><circle cx="820.3" cy="674.2" r="1.5" fill="#2a0a0a" stroke="#0d0505" stroke-width="0.9"/><circle cx="897.5" cy="249.5" r="1.5" fill="#2a0a0a" stroke="#0d0505" stroke-width="0.9"/><circle cx="897.5" cy="344.6" r="1.5" fill="#2a0a0a" stroke="#0d0505" stroke-width="0.9"/><circle cx="897.5" cy="440" r="1.5" fill="#2a0a0a" stroke="#0d0505" stroke-width="0.9"/><circle cx="897.5" cy="534.8" r="1.5" fill="#2a0a0a" stroke="#0d0505" stroke-width="0.9"/><circle cx="897.5" cy="630" r="1.5" fill="#2a0a0a" stroke="#0d0505" stroke-width="0.9"/><circle cx="975.6" cy="204.8" r="1.5" fill="#2a0a0a" stroke="#0d0505" stroke-width="0.9"/><circle cx="975.6" cy="299" r="1.5" fill="#2a0a0a" stroke="#0d0505" stroke-width="0.9"/><circle cx="975.6" cy="395" r="1.5" fill="#2a0a0a" stroke="#0d0505" stroke-width="0.9"/><circle cx="975.6" cy="490" r="1.5" fill="#2a0a0a" stroke="#0d0505" stroke-width="0.9"/><circle cx="975.6" cy="584.8" r="1.5" fill="#2a0a0a" stroke="#0d0505" stroke-width="0.9"/><circle cx="989.8" cy="203.9" r="1.5" fill="#2a0a0a" stroke="#0d0505" stroke-width="0.9"/><circle cx="989.8" cy="299" r="1.5" fill="#2a0a0a" stroke="#0d0505" stroke-width="0.9"/><circle cx="989.8" cy="395" r="1.5" fill="#2a0a0a" stroke="#0d0505" stroke-width="0.9"/><circle cx="989.8" cy="490" r="1.5" fill="#2a0a0a" stroke="#0d0505" stroke-width="0.9"/><circle cx="989.8" cy="584.8" r="1.5" fill="#2a0a0a" stroke="#0d0505" stroke-width="0.9"/><circle cx="1068" cy="249.5" r="1.5" fill="#2a0a0a" stroke="#0d0505" stroke-width="0.9"/><circle cx="1068" cy="344.6" r="1.5" fill="#2a0a0a" stroke="#0d0505" stroke-width="0.9"/><circle cx="1068" cy="439.5" r="1.5" fill="#2a0a0a" stroke="#0d0505" stroke-width="0.9"/><circle cx="1068" cy="534.8" r="1.5" fill="#2a0a0a" stroke="#0d0505" stroke-width="0.9"/><circle cx="1068" cy="630" r="1.5" fill="#2a0a0a" stroke="#0d0505" stroke-width="0.9"/><circle cx="1147" cy="295" r="1.5" fill="#2a0a0a" stroke="#0d0505" stroke-width="0.9"/><circle cx="1147" cy="390.5" r="1.5" fill="#2a0a0a" stroke="#0d0505" stroke-width="0.9"/><circle cx="1147" cy="485.5" r="1.5" fill="#2a0a0a" stroke="#0d0505" stroke-width="0.9"/><circle cx="1147" cy="580.3" r="1.5" fill="#2a0a0a" stroke="#0d0505" stroke-width="0.9"/><circle cx="1147" cy="674.8" r="1.5" fill="#2a0a0a" stroke="#0d0505" stroke-width="0.9"/><ellipse cx="1512" cy="238" rx="32" ry="12" fill="url(#shd)"/><polygon points="1516.7,180.5 1546.6,194.7 1516.2,209.9 1487.3,194.1" fill="#eeeeee" stroke="#9c9c9c" stroke-width="0.9" stroke-linejoin="round" /><polygon points="1487.3,194.1 1516.2,209.9 1516.2,244.5 1490,225.6" fill="url(#cubeL)" stroke="#9c9c9c" stroke-width="0.9" stroke-linejoin="round" /><polygon points="1516.2,209.9 1546.6,194.7 1543.5,225.1 1516.2,244.5" fill="url(#cubeL)" stroke="#9c9c9c" stroke-width="0.9" stroke-linejoin="round" /><text x="0" y="0" font-size="6.5" fill="#8c8c8c" font-family="Liberation Sans" textLength="22" lengthAdjust="spacingAndGlyphs" transform="matrix(1,0.6,0,1.15,1492,216.5)">FRONTAL</text><text x="0" y="0" font-size="6.5" fill="#8c8c8c" font-family="Liberation Sans" textLength="22" lengthAdjust="spacingAndGlyphs" transform="matrix(1,-0.55,0,1.15,1520.5,229.3)">DERECHA</text><text x="0" y="0" font-size="6" fill="#8c8c8c" font-family="Liberation Sans" textLength="27" lengthAdjust="spacingAndGlyphs" transform="translate(1531,199) rotate(204)">SUPERIOR</text><rect x="1524.3" y="150.3" width="10" height="3.2" rx="1.2" fill="#fff" stroke="#555" stroke-width="1.1"/><path d="M1539.5,148.5 l2.3,-2.8 h6.8 v6.8 l-2.3,2.6 h-6.8 z" fill="#f4f4f4" stroke="#555" stroke-width="1.1" stroke-linejoin="round"/><path d="M1539.5,148.5 h6.8 v6.6 M1546.3,148.5 l2.3,-2.8" fill="none" stroke="#777" stroke-width="0.8"/><rect x="1541.2" y="150.3" width="3" height="3" fill="#fff" stroke="#555" stroke-width="0.8"/><path d="M1555,147 l7,6.8 M1562,147 l-7,6.8" stroke="#4a4a4a" stroke-width="3.2" stroke-linecap="round"/><path d="M1555,147 l7,6.8 M1562,147 l-7,6.8" stroke="#fff" stroke-width="1.1" stroke-linecap="round"/><path d="M1570.8,148.2 l2.8,-3 l2.8,3" fill="none" stroke="#333" stroke-width="1.6"/><path d="M1570,813 l3.5,3.5 l3.5,-3.5" fill="none" stroke="#333" stroke-width="1.5"/><path d="M698,825 l-3.5,3.5 l3.5,3.5" fill="none" stroke="#333" stroke-width="1.5"/><path d="M1557,825 l3.5,3.5 l-3.5,3.5" fill="none" stroke="#333" stroke-width="1.5"/><g fill="#9a9a9a"><rect x="1577" y="828" width="1.5" height="1.5"/><rect x="1574" y="831" width="1.5" height="1.5"/><rect x="1577" y="831" width="1.5" height="1.5"/><rect x="1571" y="834" width="1.5" height="1.5"/><rect x="1574" y="834" width="1.5" height="1.5"/><rect x="1577" y="834" width="1.5" height="1.5"/></g><rect x="1537.5" y="261" width="28.5" height="96" rx="3.5" fill="#f8f8f8" stroke="#b8b8b8" stroke-width="1.3"/><circle cx="1559.7" cy="266.3" r="2.6" fill="#eee" stroke="#999"/><path d="M1558.3,265 l2.8,2.8 M1561.1,265 l-2.8,2.8" stroke="#999" stroke-width="0.7"/><circle cx="1549.5" cy="285.5" r="7.3" fill="#efefef" stroke="#999" stroke-width="1.2"/><circle cx="1549.5" cy="285.5" r="2.8" fill="#fff" stroke="#999"/><path d="M1553,291 l2,-2 h5 v5 l-2,2 h-5 z" fill="#8ab8e8" stroke="#3f7fc8" stroke-width="0.8"/><path d="M1549,302.5 h4 l-2,2 z" fill="#555"/><line x1="1541" y1="308.5" x2="1562" y2="308.5" stroke="#c8c8c8"/><rect x="1545" y="316" width="9" height="9" fill="#a6d08a" stroke="#7fb060" stroke-width="0.7"/><circle cx="1554" cy="324" r="2.3" fill="#fff" stroke="#666"/><line x1="1555.5" y1="325.5" x2="1558" y2="328" stroke="#666" stroke-width="1.1"/><path d="M1549,337 h4 l-2,2 z" fill="#555"/><circle cx="1559.7" cy="350.5" r="2.6" fill="#eee" stroke="#999"/><line x1="1558" y1="350.5" x2="1561.4" y2="350.5" stroke="#999" stroke-width="0.7"/><rect x="465.5" y="823.5" width="13" height="10" rx="2" fill="#3c4250"/><g fill="#fff"><circle cx="468.0" cy="826.0" r="1"/><circle cx="468.0" cy="828.6" r="1"/><circle cx="468.0" cy="831.2" r="1"/><circle cx="470.8" cy="826.0" r="1"/><circle cx="470.8" cy="828.6" r="1"/><circle cx="470.8" cy="831.2" r="1"/><circle cx="473.6" cy="826.0" r="1"/><circle cx="473.6" cy="828.6" r="1"/><circle cx="473.6" cy="831.2" r="1"/><circle cx="476.4" cy="826.0" r="1"/><circle cx="476.4" cy="828.6" r="1"/><circle cx="476.4" cy="831.2" r="1"/></g><path d="M484,827 l3,-3 h10 v7 l-3,3 h-10 z" fill="#4a9ad8" stroke="#2b5e9a"/><path d="M484,829 h10 M484,831 h10" stroke="#e23" stroke-width="0.8"/><path d="M484,830 h10" stroke="#3a3" stroke-width="0.8"/><g stroke="#bdbdbd" fill="none"><circle cx="506" cy="829" r="2.5"/><path d="M501,829 h2 M509,829 h2 M506,824 v2 M506,832 v2 M503,826 l1,1 M509,832 l-1,-1"/></g><g stroke="#bdbdbd" fill="none"><circle cx="523" cy="828" r="3"/><path d="M520,833 h9 M524,831 l4,2"/></g><path d="M535,826 h8 v6 h-8 z" fill="none" stroke="#2a5ea8" stroke-width="1.3"/><path d="M541,829 l5,5 M546,829 l-5,5" stroke="#e22" stroke-width="1.6"/><path d="M551,826 h8 v6 h-8 z" fill="none" stroke="#2a5ea8" stroke-width="1.3"/><circle cx="561" cy="828" r="2" fill="none" stroke="#2a5ea8"/><path d="M568,829 l5,-5 l5,5 v5 h-10 z" fill="#eee" stroke="#333"/><rect x="574" y="830" width="5" height="4" fill="#3a8a6a"/><path d="M586,828 q3,-2 5,1 q3,3 6,-1 l2,-2" fill="none" stroke="#333" stroke-width="1.2"/><circle cx="590" cy="830" r="2" fill="none" stroke="#333"/><circle cx="595" cy="830" r="2" fill="none" stroke="#333"/><g stroke="#c0c0c0" fill="none"><circle cx="609" cy="827" r="2"/><path d="M609,829 v4"/></g><g stroke="#c0c0c0" fill="none"><rect x="621" y="825" width="10" height="8"/><circle cx="627" cy="829" r="2"/></g><g stroke="#c0c0c0" fill="none"><path d="M638,833 v-6 l5,-3 l7,3 v6"/><path d="M641,833 v-4 M645,833 v-4"/></g><g stroke="#c0c0c0" fill="none"><path d="M656,833 v-6 l4,-3 h7 v6 l-4,3 z"/></g><g stroke="#333" fill="none"><path d="M672,824 h15 M672,822 v4 M687,822 v4"/><path d="M673,826 v8 M686,826 v2"/></g><rect x="681" y="829" width="6" height="5" fill="#444"/><path d="M682,829 v-2 a1.5,1.5 0 0 1 4,0 v2" fill="none" stroke="#444"/></svg>
<div class="a" style="left:0px;top:836px;width:1582px;height:22px;background:linear-gradient(#f0f0f0 0px,#e4e4e4 4px,#d0d0d0 20px);"></div>
<div class="a" style="left:0px;top:836px;width:1582px;height:1px;background:#f6f6f6;"></div>
<div class="a" style="left:0px;top:837px;width:1582px;height:1.5px;background:#b8b8b8;"></div>
<div class="a" style="left:0px;top:856.7px;width:1582px;height:1.3px;background:#1c1c1c;"></div>
<div class="t" style="left:2px;top:842px;font-size:11px;color:#1a1a1a;letter-spacing:-0.45px;">Listo</div>
<svg class="a" style="left:0;top:0" width="1582" height="858" viewBox="0 0 1582 858"><line x1="1397.5" y1="838" x2="1397.5" y2="856" stroke="#c4c4c4"/><line x1="1418.5" y1="838" x2="1418.5" y2="856" stroke="#c4c4c4"/><line x1="1439.5" y1="838" x2="1439.5" y2="856" stroke="#c4c4c4"/><line x1="1460.5" y1="838" x2="1460.5" y2="856" stroke="#c4c4c4"/><line x1="1482.5" y1="838" x2="1482.5" y2="856" stroke="#c4c4c4"/><line x1="1503.5" y1="838" x2="1503.5" y2="856" stroke="#c4c4c4"/><g fill="none" stroke="#e0a010" stroke-width="1.6"><ellipse cx="1404" cy="845" rx="2.7" ry="2"/><ellipse cx="1409" cy="845" rx="2.7" ry="2"/></g><path d="M1406,845 v9 l2,-2 l1.5,3 l1.3,-0.7 l-1.5,-3 h3 z" fill="#fff" stroke="#333" stroke-width="0.8"/><path d="M1423,851 l4,-5 h6 M1423,854 h8" stroke="#2a6ec0" fill="none" stroke-width="1.2"/><path d="M1430,841 l4,4 M1434,841 l-4,4" stroke="#e22" stroke-width="1.5"/><path d="M1428,846 v9 l2,-2 l1.5,3 l1.3,-0.7 l-1.5,-3 h3 z" fill="#fff" stroke="#333" stroke-width="0.8"/><rect x="1444" y="841" width="7" height="3" fill="#f0a050" stroke="#c86020"/><rect x="1444.5" y="845" width="6" height="3" fill="#f0a050" stroke="#c86020"/><line x1="1447.5" y1="848" x2="1447.5" y2="854" stroke="#555"/><path d="M1451,846 v9 l2,-2 l1.5,3 l1.3,-0.7 l-1.5,-3 h3 z" fill="#fff" stroke="#333" stroke-width="0.8"/><path d="M1466,845 l4,-3 v11 l-4,2 z" fill="#8ab8e8" stroke="#2a6ec0"/><path d="M1472,841 l4,4 M1476,841 l-4,4" stroke="#e22" stroke-width="1.5"/><path d="M1472,846 v9 l2,-2 l1.5,3 l1.3,-0.7 l-1.5,-3 h3 z" fill="#fff" stroke="#333" stroke-width="0.8"/><path d="M1490,840 v8 M1486,844 h8" stroke="#222" stroke-width="1.3"/><path d="M1493,845 v9 l2,-2 l1.5,3 l1.3,-0.7 l-1.5,-3 h3 z" fill="#fff" stroke="#333" stroke-width="0.8"/><defs><linearGradient id="fun" x1="0" y1="0" x2="1" y2="0"><stop offset="0" stop-color="#9a9a9a"/><stop offset="0.5" stop-color="#e8e8e8"/><stop offset="1" stop-color="#8a8a8a"/></linearGradient></defs><path d="M1505,841.5 h12.5 l-4.8,6 v5.5 h-3 v-5.5 z" fill="url(#fun)" stroke="#6a6a6a" stroke-width="0.9" stroke-linejoin="round"/></svg>
<div class="t" style="left:1519px;top:843.5px;font-size:11px;color:#1a1a1a;letter-spacing:-0.30px;">:0</div>
</body></html>
